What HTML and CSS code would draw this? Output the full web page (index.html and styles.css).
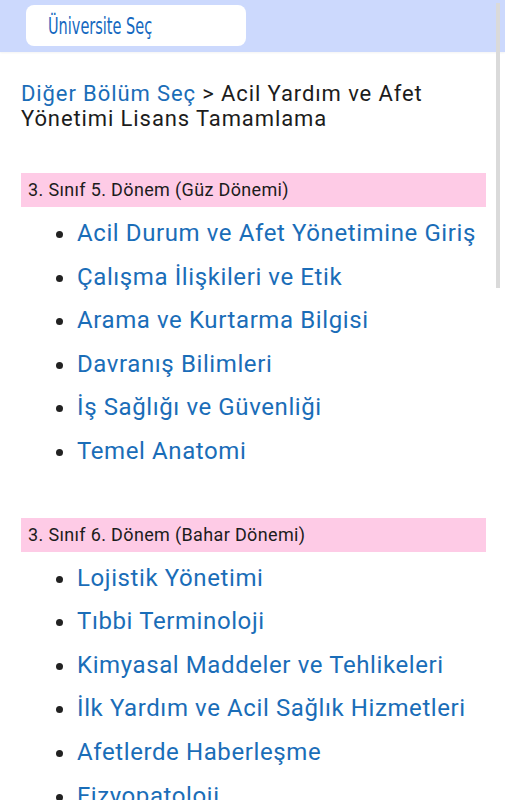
FILE: index.html
```html
<!DOCTYPE html>
<html lang="tr">
<head>
    <meta charset="UTF-8">
    <meta name="viewport" content="width=device-width, initial-scale=1.0">
    <title>Acil Yardım ve Afet Yönetimi Lisans Tamamlama</title>
    <link rel="stylesheet" href="styles.css">
</head>
<body>
    <div class="topbar">
        <a href="#" class="uni-btn"><span class="uni-label">Üniversite Seç</span></a>
    </div>
    <div class="scroll-thumb"></div>
    <div class="content">
        <h1 class="crumb"><a href="#">Diğer Bölüm Seç</a> &gt; Acil Yardım ve Afet Yönetimi Lisans Tamamlama</h1>

        <div class="term">
            <h2 class="term-title">3. Sınıf 5. Dönem (Güz Dönemi)</h2>
            <ul class="course-list">
                <li><a href="#">Acil Durum ve Afet Yönetimine Giriş</a></li>
                <li><a href="#">Çalışma İlişkileri ve Etik</a></li>
                <li><a href="#">Arama ve Kurtarma Bilgisi</a></li>
                <li><a href="#">Davranış Bilimleri</a></li>
                <li><a href="#">İş Sağlığı ve Güvenliği</a></li>
                <li><a href="#">Temel Anatomi</a></li>
            </ul>
        </div>

        <div class="term">
            <h2 class="term-title">3. Sınıf 6. Dönem (Bahar Dönemi)</h2>
            <ul class="course-list">
                <li><a href="#">Lojistik Yönetimi</a></li>
                <li><a href="#">Tıbbi Terminoloji</a></li>
                <li><a href="#">Kimyasal Maddeler ve Tehlikeleri</a></li>
                <li><a href="#">İlk Yardım ve Acil Sağlık Hizmetleri</a></li>
                <li><a href="#">Afetlerde Haberleşme</a></li>
                <li><a href="#">Fizyopatoloji</a></li>
            </ul>
        </div>
    </div>
</body>
</html>
```

FILE: styles.css
```css
* {
    margin: 0;
    padding: 0;
    box-sizing: border-box;
}

body {
    font-family: Roboto, "Noto Sans", Arial, sans-serif;
    background: #fff;
    color: #1c1c1c;
}

a {
    text-decoration: none;
    color: #1a6db8;
}

.topbar {
    height: 52px;
    background: #ccd9fd;
    padding: 5px 26px 0;
    box-shadow: 0 1px 2px rgba(0, 0, 0, 0.05);
}

.uni-btn {
    display: flex;
    align-items: center;
    width: 220px;
    height: 41px;
    padding-left: 22px;
    background: #fff;
    border-radius: 8px;
    color: #1468c0;
}

.uni-label {
    display: inline-block;
    font-family: "DejaVu Sans", sans-serif;
    font-size: 23px;
    transform: scaleX(0.63);
    transform-origin: left center;
    white-space: nowrap;
}

.scroll-thumb {
    position: fixed;
    top: 3px;
    right: 5px;
    width: 4px;
    height: 285px;
    background: #dadada;
}

.content {
    padding: 29px 20px 0 21px;
}

.crumb {
    font-size: 22px;
    font-weight: 400;
    line-height: 25px;
    letter-spacing: 0.9px;
    color: #1c1c1c;
}

.term {
    margin-top: 42px;
}

.term + .term {
    margin-top: 44px;
}

.term-title {
    background: #fecbe6;
    width: 465px;
    height: 34px;
    padding: 3px 7px 0;
    font-size: 18px;
    font-weight: 400;
    line-height: 28px;
    letter-spacing: 0.35px;
    color: #1c1c1c;
}

.course-list {
    list-style: disc;
    padding-left: 56px;
    margin-top: 5px;
}

.course-list li {
    font-size: 24px;
    line-height: 43.6px;
    letter-spacing: 0.6px;
    color: #222;
}
```
